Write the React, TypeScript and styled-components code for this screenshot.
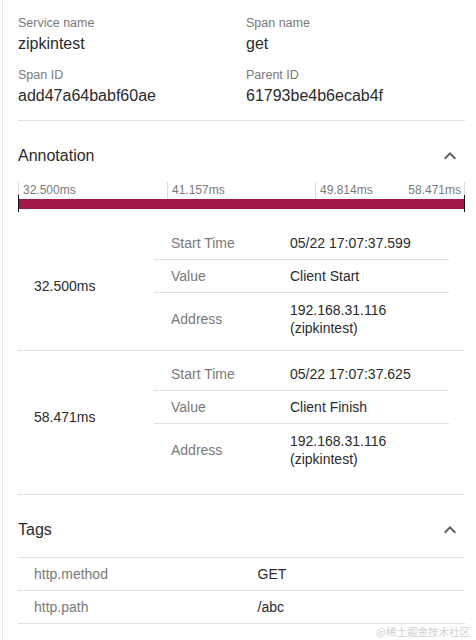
import React from "react";
import styled, { createGlobalStyle } from "styled-components";

const GlobalStyle = createGlobalStyle`
  html, body { margin: 0; padding: 0; background: #fff; }
  body { font-family: "Liberation Sans", Arial, "Noto Sans CJK SC", sans-serif; }
  * { box-sizing: border-box; }
`;

const Page = styled.div`
  position: relative;
  height: 640px;
  overflow: hidden;
  padding-left: 2px;
`;

const Panel = styled.div`
  border-left: 1px solid #e6e6e6;
  padding: 0 11px 0 15px;
  min-height: 640px;
`;

const InfoGrid = styled.div`
  display: grid;
  grid-template-columns: 228px 1fr;
  row-gap: 10px;
  padding: 14px 0 12px;
  border-bottom: 1px solid #e0e0e0;
`;

const Field = styled.div`
  display: flex;
  flex-direction: column;
`;

const FieldLabel = styled.div`
  font-size: 12.5px;
  line-height: 18px;
  color: #7a7a7a;
`;

const FieldValue = styled.div`
  font-size: 16px;
  line-height: 24px;
  color: #2b2b2b;
`;

const Section = styled.section<{ $padBottom: number; $border: boolean }>`
  padding-bottom: ${(p) => p.$padBottom}px;
  border-bottom: ${(p) => (p.$border ? "1px solid #e0e0e0" : "none")};
`;

const SectionHeader = styled.div`
  display: flex;
  justify-content: space-between;
  align-items: center;
  padding-top: 23px;
  padding-bottom: 0;
  height: 46px;
`;

const SectionTitle = styled.h2`
  margin: 0;
  font-size: 16px;
  font-weight: normal;
  line-height: 22px;
  color: #2b2b2b;
`;

const ChevronButton = styled.span`
  display: inline-flex;
  width: 24px;
  height: 24px;
  margin-right: 3px;
  color: #5c5c5c;
`;

const Timeline = styled.div`
  margin-top: 15px;
`;

const TickRow = styled.div`
  display: grid;
  grid-template-columns: 149px 148px 1fr;
  height: 17px;
`;

const TickCell = styled.div<{ $last?: boolean }>`
  display: flex;
  justify-content: space-between;
  border-left: 1px solid #dcdcdc;
  border-right: ${(p) => (p.$last ? "1px solid #dcdcdc" : "none")};
  padding: 1px 3px 0 4px;
  font-size: 12px;
  line-height: 14px;
  color: #7a7a7a;
`;

const Bar = styled.div`
  position: relative;
  height: 10px;
  background: #a3184a;

  &::before,
  &::after {
    content: "";
    position: absolute;
    top: -4px;
    bottom: -3px;
    width: 1px;
    background: #111;
  }
  &::before { left: 0; }
  &::after { right: 0; }
`;

const AnnotationList = styled.div`
  margin-top: 11px;
`;

const Group = styled.div`
  display: grid;
  grid-template-columns: 136px 1fr;
  padding: 7px 16px 7px 0;
  border-bottom: 1px solid #e0e0e0;

  &:last-child {
    border-bottom: none;
  }
`;

const TimeCell = styled.div`
  display: flex;
  align-items: center;
  padding-left: 16px;
  padding-top: 1px;
  font-size: 14px;
  color: #2b2b2b;
`;

const InnerTable = styled.div`
  display: flex;
  flex-direction: column;
`;

const InnerRow = styled.div`
  display: grid;
  grid-template-columns: 120px 1fr;
  align-items: center;
  padding: 7px 0;
  font-size: 14px;
  line-height: 18px;
  border-bottom: 1px solid #e0e0e0;

  &:last-child {
    border-bottom: none;
    padding-top: 8px;
    padding-bottom: 6px;
  }
`;

const InnerLabel = styled.div`
  padding-left: 17px;
  color: #7a7a7a;
`;

const InnerValue = styled.div`
  padding-left: 16px;
  color: #2b2b2b;
`;

const TagTable = styled.div`
  margin-top: 16px;
  border-top: 1px solid #e0e0e0;
`;

const TagRow = styled.div`
  display: grid;
  grid-template-columns: 1fr 1fr;
  padding: 7px 0;
  font-size: 14px;
  line-height: 18px;
  border-bottom: 1px solid #e0e0e0;
`;

const TagKey = styled.div`
  padding: 0 16px;
  color: #7a7a7a;
`;

const TagValue = styled.div`
  padding: 0 16px;
  color: #2b2b2b;
`;

const Watermark = styled.div`
  position: absolute;
  right: 6px;
  bottom: 2px;
  font-family: "Noto Sans CJK SC", sans-serif;
  font-size: 10.5px;
  line-height: 13px;
  color: #d0d0d0;
`;

const ExpandLess = () => (
  <svg width="24" height="24" viewBox="0 0 24 24" fill="currentColor">
    <path d="M12 8l-6 6 1.41 1.41L12 10.83l4.59 4.58L18 14z" />
  </svg>
);

type Annotation = {
  time: string;
  start: string;
  value: string;
  address: [string, string];
};

const annotations: Annotation[] = [
  {
    time: "32.500ms",
    start: "05/22 17:07:37.599",
    value: "Client Start",
    address: ["192.168.31.116", "(zipkintest)"],
  },
  {
    time: "58.471ms",
    start: "05/22 17:07:37.625",
    value: "Client Finish",
    address: ["192.168.31.116", "(zipkintest)"],
  },
];

const tags = [
  { key: "http.method", value: "GET" },
  { key: "http.path", value: "/abc" },
];

export default function App() {
  return (
    <>
      <GlobalStyle />
      <Page>
        <Panel>
          <InfoGrid>
            <Field>
              <FieldLabel>Service name</FieldLabel>
              <FieldValue>zipkintest</FieldValue>
            </Field>
            <Field>
              <FieldLabel>Span name</FieldLabel>
              <FieldValue>get</FieldValue>
            </Field>
            <Field>
              <FieldLabel>Span ID</FieldLabel>
              <FieldValue>add47a64babf60ae</FieldValue>
            </Field>
            <Field>
              <FieldLabel>Parent ID</FieldLabel>
              <FieldValue>61793be4b6ecab4f</FieldValue>
            </Field>
          </InfoGrid>

          <Section $padBottom={13} $border>
            <SectionHeader>
              <SectionTitle>Annotation</SectionTitle>
              <ChevronButton>
                <ExpandLess />
              </ChevronButton>
            </SectionHeader>
            <Timeline>
              <TickRow>
                <TickCell>32.500ms</TickCell>
                <TickCell>41.157ms</TickCell>
                <TickCell $last>
                  <span>49.814ms</span>
                  <span>58.471ms</span>
                </TickCell>
              </TickRow>
              <Bar />
            </Timeline>
            <AnnotationList>
              {annotations.map((a) => (
                <Group key={a.time}>
                  <TimeCell>{a.time}</TimeCell>
                  <InnerTable>
                    <InnerRow>
                      <InnerLabel>Start Time</InnerLabel>
                      <InnerValue>{a.start}</InnerValue>
                    </InnerRow>
                    <InnerRow>
                      <InnerLabel>Value</InnerLabel>
                      <InnerValue>{a.value}</InnerValue>
                    </InnerRow>
                    <InnerRow>
                      <InnerLabel>Address</InnerLabel>
                      <InnerValue>
                        {a.address[0]}
                        <br />
                        {a.address[1]}
                      </InnerValue>
                    </InnerRow>
                  </InnerTable>
                </Group>
              ))}
            </AnnotationList>
          </Section>

          <Section $padBottom={0} $border={false}>
            <SectionHeader>
              <SectionTitle>Tags</SectionTitle>
              <ChevronButton>
                <ExpandLess />
              </ChevronButton>
            </SectionHeader>
            <TagTable>
              {tags.map((t) => (
                <TagRow key={t.key}>
                  <TagKey>{t.key}</TagKey>
                  <TagValue>{t.value}</TagValue>
                </TagRow>
              ))}
            </TagTable>
          </Section>
        </Panel>
        <Watermark>@稀土掘金技术社区</Watermark>
      </Page>
    </>
  );
}
